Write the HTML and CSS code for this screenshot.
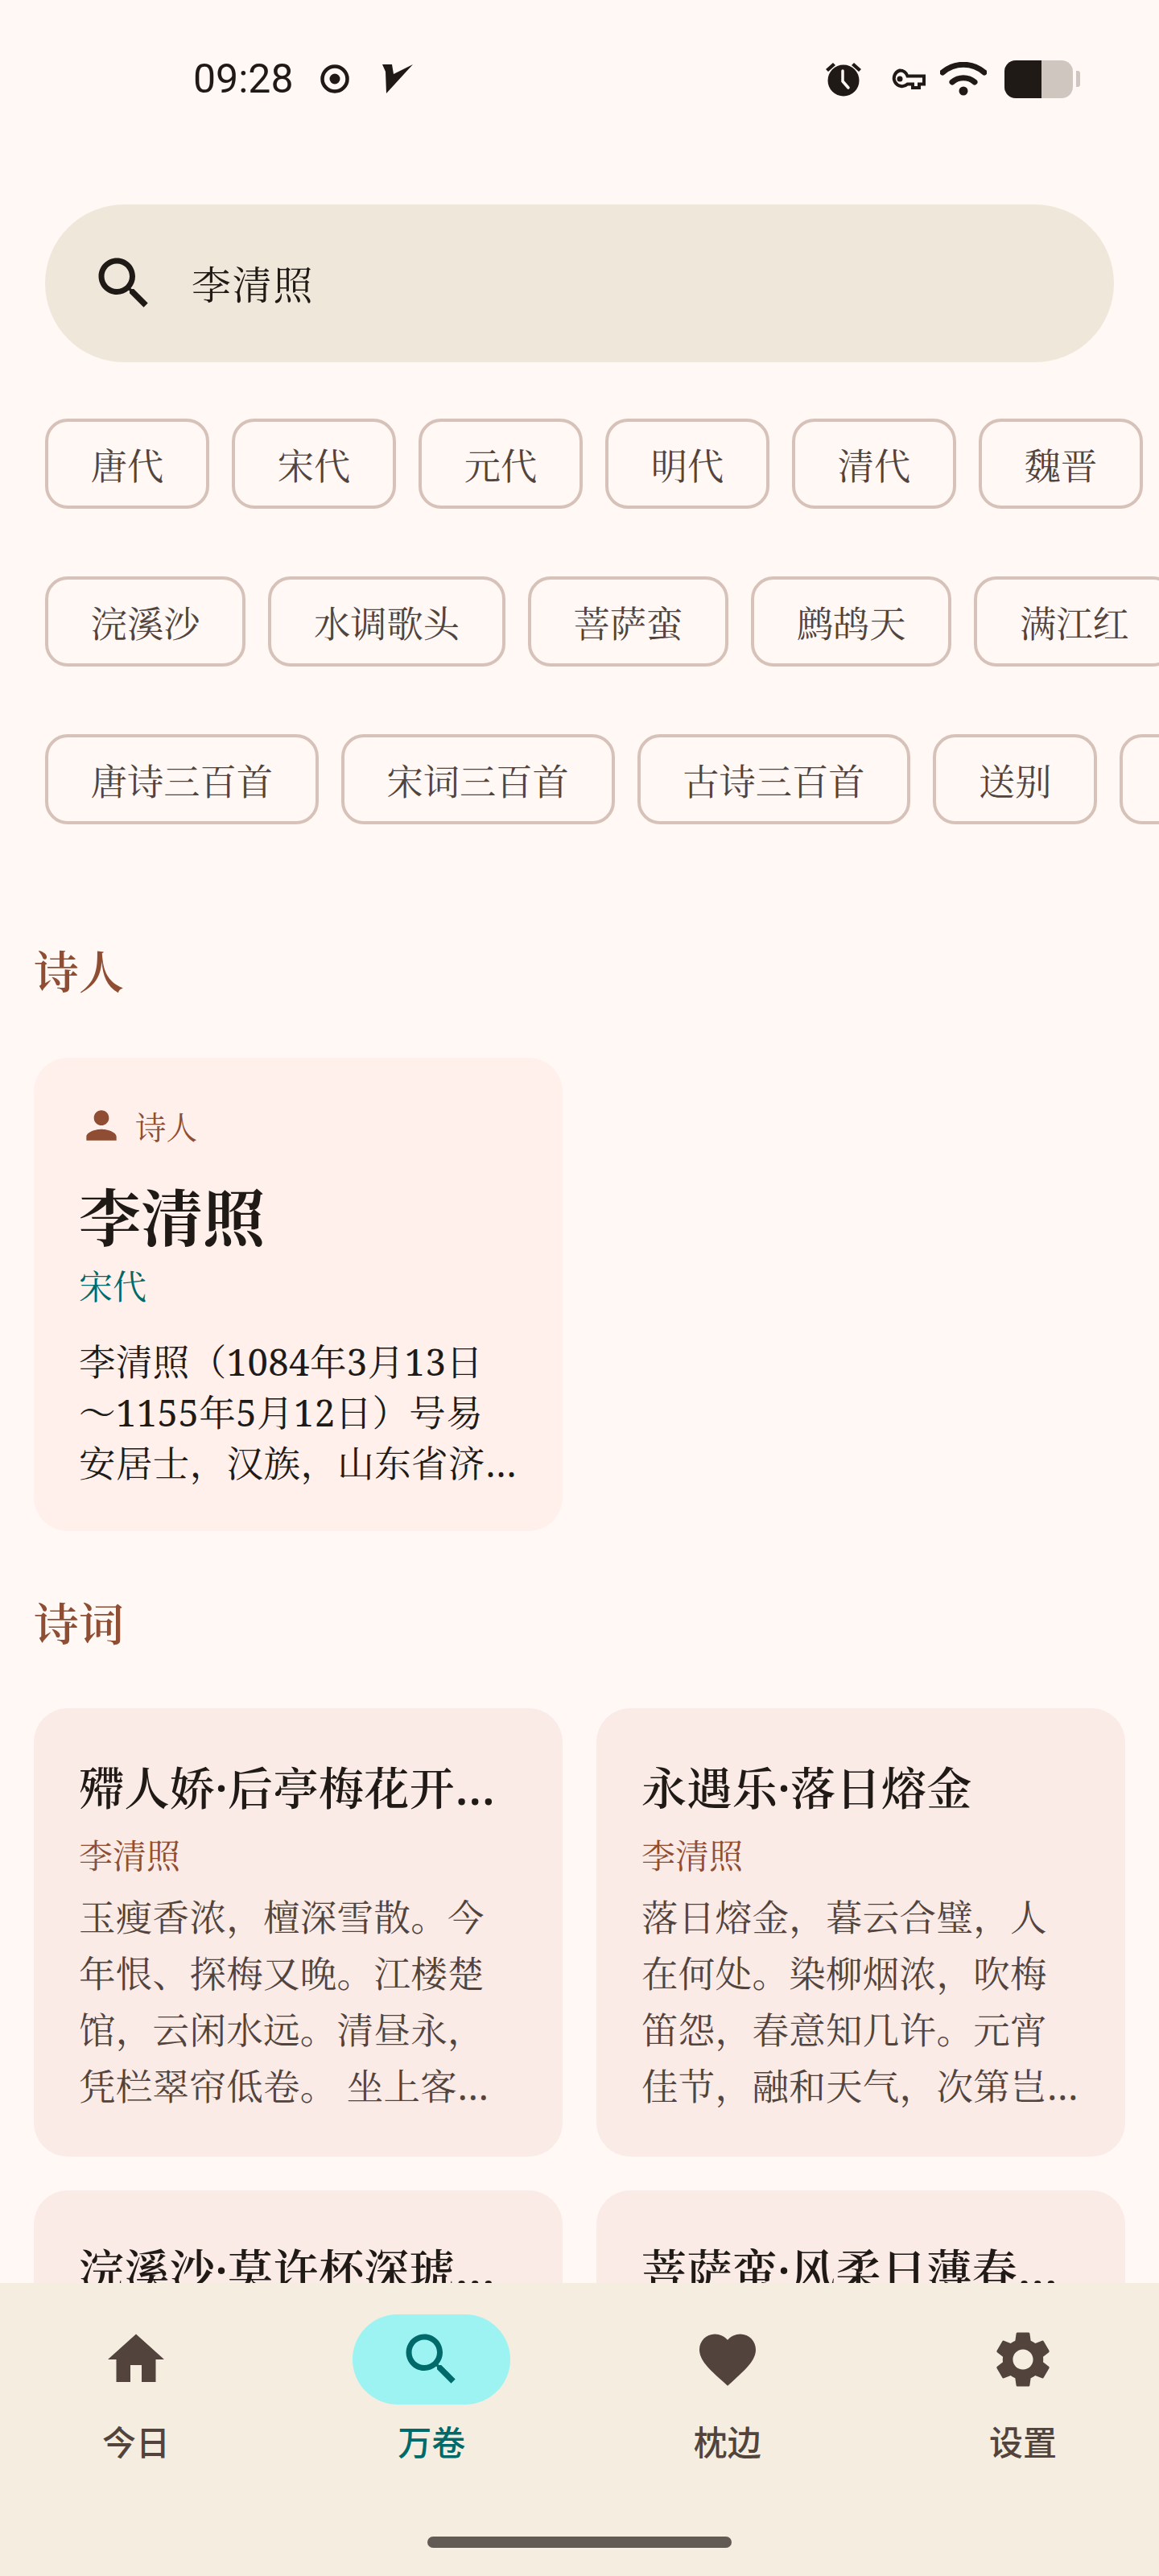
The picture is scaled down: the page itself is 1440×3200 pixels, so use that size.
FILE: index.html
```html
<!DOCTYPE html>
<html lang="zh-CN">
<head>
<meta charset="utf-8">
<title>万卷</title>
<link rel="stylesheet" href="styles.css">
</head>
<body>
<div class="screen">
  <main class="content">
    <header class="status">
      <div class="status-left">
        <span class="time">09:28</span>
        <svg class="ic-target" viewBox="0 0 36 36"><circle cx="18" cy="18" r="15.500" fill="none" stroke="#201a17" stroke-width="4.500"/><circle cx="18" cy="18" r="6.500" fill="#201a17"/></svg>
        <svg class="ic-v" viewBox="0 0 38 36"><path d="M0 0h12l2 12L38 0 5 36 4 9z" fill="#201a17"/></svg>
      </div>
      <div class="status-right">
        <svg class="ic-alarm" viewBox="0 0 44 44"><path d="M0 10l9-8 3 3-9 8zM44 10l-9-8-3 3 9 8z" fill="#201a17"/><circle cx="22" cy="24" r="19.500" fill="#201a17"/><path d="M21 12v13l7 8" fill="none" stroke="#fff8f5" stroke-width="3.500" stroke-linecap="round"/></svg>
        <svg class="ic-key" viewBox="0 0 44 26"><path d="M12 2.500a10 10 0 0 1 9.500 7H42v10h-6v4.500h-8v-4.500h-6.500A10 10 0 1 1 12 2.500z" fill="none" stroke="#201a17" stroke-width="4"/><circle cx="12" cy="13" r="3.500" fill="#201a17"/></svg>
        <svg class="ic-wifi" viewBox="0 0 58 42"><path d="M3 13C18 0 40 0 55 13M15 25c8-7 20-7 28 0" fill="none" stroke="#201a17" stroke-width="7" stroke-linecap="round"/><circle cx="29" cy="36" r="5.500" fill="#201a17"/></svg>
        <div class="battery"><div class="battery-body"><div class="battery-fill"></div></div><div class="battery-nub"></div></div>
      </div>
    </header>

    <div class="search">
      <svg class="ic-24" viewBox="0 0 24 24"><path fill="#201a17" d="M15.500 14h-.79l-.28-.27C15.410 12.590 16 11.110 16 9.500 16 5.910 13.090 3 9.500 3S3 5.910 3 9.500 5.910 16 9.500 16c1.610 0 3.090-.59 4.230-1.570l.27.28v.79l5 4.990L20.490 19l-4.990-5zm-6 0C7.010 14 5 11.990 5 9.500S7.010 5 9.500 5 14 7.010 14 9.500 11.990 14 9.500 14z"/></svg>
      <span class="search-text">李清照</span>
    </div>

    <div class="chip-rows">
      <div class="chip-row"><span class="chip">唐代</span><span class="chip">宋代</span><span class="chip">元代</span><span class="chip">明代</span><span class="chip">清代</span><span class="chip">魏晋</span></div>
      <div class="chip-row"><span class="chip">浣溪沙</span><span class="chip">水调歌头</span><span class="chip">菩萨蛮</span><span class="chip">鹧鸪天</span><span class="chip">满江红</span></div>
      <div class="chip-row"><span class="chip">唐诗三百首</span><span class="chip">宋词三百首</span><span class="chip">古诗三百首</span><span class="chip">送别</span><span class="chip">边塞</span></div>
    </div>

    <h2 class="section first">诗人</h2>
    <div class="grid">
      <article class="card poet">
        <div class="poet-tag">
          <svg class="ic-16" viewBox="0 0 24 24"><path fill="#8f4e33" d="M12 12c2.210 0 4-1.790 4-4s-1.790-4-4-4-4 1.790-4 4 1.790 4 4 4zm0 2c-2.670 0-8 1.340-8 4v2h16v-2c0-2.660-5.330-4-8-4z"/></svg>
          <span>诗人</span>
        </div>
        <h3 class="poet-name">李清照</h3>
        <div class="poet-era">宋代</div>
        <p class="poet-bio">李清照（1084年3月13日～1155年5月12日）号易安居士，汉族，山东省济南章丘人。</p>
      </article>
    </div>

    <h2 class="section">诗词</h2>
    <div class="grid">
      <article class="card poem">
        <h3 class="poem-title">殢人娇·后亭梅花开犹未</h3>
        <div class="poem-author">李清照</div>
        <p class="poem-body">玉瘦香浓，檀深雪散。今年恨、探梅又晚。江楼楚馆，云闲水远。清昼永，凭栏翠帘低卷。 坐上客来，尊前酒满。歌声共、水流云断。</p>
      </article>
      <article class="card poem">
        <h3 class="poem-title">永遇乐·落日熔金</h3>
        <div class="poem-author">李清照</div>
        <p class="poem-body">落日熔金，暮云合璧，人在何处。染柳烟浓，吹梅笛怨，春意知几许。元宵佳节，融和天气，次第岂无风雨。来相召、香车宝马。</p>
      </article>
      <article class="card poem">
        <h3 class="poem-title">浣溪沙·莫许杯深琥珀浓</h3>
        <div class="poem-author">李清照</div>
        <p class="poem-body">莫许杯深琥珀浓，未成沉醉意先融。疏钟已应晚来风。</p>
      </article>
      <article class="card poem">
        <h3 class="poem-title">菩萨蛮·风柔日薄春犹早</h3>
        <div class="poem-author">李清照</div>
        <p class="poem-body">风柔日薄春犹早，夹衫乍著心情好。睡起觉微寒，梅花鬓上残。</p>
      </article>
    </div>
  </main>

  <nav class="nav">
    <div class="nav-items">
      <div class="nav-item">
        <div class="nav-icon"><svg class="ic-24" viewBox="0 0 24 24"><path fill="#52443d" d="M10 20v-6h4v6h5v-8h3L12 3 2 12h3v8z"/></svg></div>
        <span class="nav-label">今日</span>
      </div>
      <div class="nav-item active">
        <div class="nav-icon"><svg class="ic-24" viewBox="0 0 24 24"><path fill="#006a6a" d="M15.500 14h-.79l-.28-.27C15.410 12.590 16 11.110 16 9.500 16 5.910 13.090 3 9.500 3S3 5.910 3 9.500 5.910 16 9.500 16c1.610 0 3.090-.59 4.230-1.570l.27.28v.79l5 4.990L20.490 19l-4.990-5zm-6 0C7.010 14 5 11.990 5 9.500S7.010 5 9.500 5 14 7.010 14 9.500 11.990 14 9.500 14z"/></svg></div>
        <span class="nav-label">万卷</span>
      </div>
      <div class="nav-item">
        <div class="nav-icon"><svg class="ic-24" viewBox="0 0 24 24"><path fill="#52443d" d="M12 21.350l-1.450-1.320C5.400 15.360 2 12.280 2 8.500 2 5.420 4.420 3 7.500 3c1.740 0 3.410.81 4.500 2.090C13.090 3.810 14.760 3 16.500 3 19.580 3 22 5.420 22 8.500c0 3.780-3.400 6.860-8.550 11.540L12 21.350z"/></svg></div>
        <span class="nav-label">枕边</span>
      </div>
      <div class="nav-item">
        <div class="nav-icon"><svg class="ic-24" viewBox="0 0 24 24"><path fill="#52443d" d="M19.140 12.940c.04-.3.06-.61.06-.94 0-.32-.02-.64-.07-.94l2.030-1.580c.18-.14.23-.41.12-.61l-1.920-3.320c-.12-.22-.37-.29-.59-.22l-2.390.96c-.5-.38-1.030-.7-1.620-.94l-.36-2.540c-.04-.24-.24-.41-.48-.41h-3.840c-.24 0-.43.17-.47.41l-.36 2.540c-.59.24-1.130.57-1.620.94l-2.390-.96c-.22-.08-.47 0-.59.22L2.740 8.870c-.12.21-.08.47.12.61l2.030 1.580c-.05.3-.09.63-.09.94s.02.64.07.94l-2.030 1.580c-.18.14-.23.41-.12.61l1.920 3.320c.12.22.37.29.59.22l2.390-.96c.5.38 1.030.7 1.620.94l.36 2.540c.05.24.24.41.48.41h3.840c.24 0 .44-.17.47-.41l.36-2.540c.59-.24 1.130-.56 1.620-.94l2.390.96c.22.08.47 0 .59-.22l1.920-3.320c.12-.22.07-.47-.12-.61l-2.010-1.580zM12 15.600c-1.980 0-3.600-1.620-3.600-3.600s1.620-3.600 3.600-3.600 3.600 1.620 3.600 3.600-1.620 3.600-3.600 3.600z"/></svg></div>
        <span class="nav-label">设置</span>
      </div>
    </div>
    <div class="handle"></div>
  </nav>
</div>
</body>
</html>
```
FILE: styles.css
```css
* { box-sizing: border-box; }
html, body { margin: 0; padding: 0; }
body {
  background: #fff8f5;
  color: #201a17;
  font-family: "Noto Serif", "Noto Serif CJK SC", "Liberation Serif", "Noto Sans CJK SC", serif;
}
.screen {
  width: 1440px;
  height: 3200px;
  display: flex;
  flex-direction: column;
  overflow: hidden;
}
.content { height: 2836px; overflow: hidden; flex: none; }
svg { display: block; flex: none; }
.ic-24 { width: 84px; height: 84px; }
.ic-16 { width: 56px; height: 56px; }

.status {
  height: 196px;
  padding: 0 98px 0 240px;
  display: flex;
  align-items: center;
  justify-content: space-between;
}
.status-left, .status-right { display: flex; align-items: center; }
.time { font: 400 50px/1 Roboto, sans-serif; color: #201a17; width: 158px; }
.ic-target { width: 36px; height: 36px; }
.ic-v { width: 38px; height: 36px; margin-left: 41px; }
.ic-alarm { width: 44px; height: 44px; }
.ic-key { width: 44px; height: 26px; margin-left: 36px; }
.ic-wifi { width: 58px; height: 42px; margin-left: 18px; }
.battery { display: flex; align-items: center; margin-left: 22px; }
.battery-body { width: 85px; height: 47px; border-radius: 14px; background: #cfc6c0; overflow: hidden; }
.battery-fill { width: 46px; height: 100%; background: #201a17; }
.battery-nub { width: 5px; height: 20px; margin-left: 4px; background: #cfc6c0; border-radius: 0 3px 3px 0; }

.search {
  margin: 58px 56px 0;
  height: 196px;
  border-radius: 98px;
  background: #efe8da;
  padding-left: 56px;
  display: flex;
  align-items: center;
  gap: 42px;
}
.search-text { font-size: 49px; line-height: 70px; color: #201a17; letter-spacing: 1.750px; padding-top: 2px; }

.chip-rows { margin-top: 70px; padding-left: 56px; display: flex; flex-direction: column; gap: 84px; }
.chip-row { display: flex; gap: 28px; }
.chip {
  flex: none;
  height: 112px;
  padding: 0 52.750px;
  border: 4px solid #d7c2b9;
  border-radius: 28px;
  font-size: 45.250px;
  color: #52443d;
  display: flex;
  align-items: center;
}

.section { margin: 72px 0 64px 42px; font-size: 56px; line-height: 84px; font-weight: 600; color: #8f4e33; }
.section.first { margin-top: 140px; margin-bottom: 66px; }

.grid { display: grid; grid-template-columns: 657px 657px; gap: 42px; padding-left: 42px; }
.card { border-radius: 42px; padding-left: 56px; padding-right: 56px; }
.card h3, .card p { margin: 0; }
.poet { background: #fff0ec; padding-top: 56px; padding-bottom: 53px; }
.poet-tag { display: flex; align-items: center; gap: 14px; height: 56px; font-size: 38.500px; color: #8f4e33; }
.poet-name { margin-top: 38px !important; font-size: 77px; line-height: 98px; font-weight: 700; }
.poet-era { margin-top: 8px; font-size: 42px; line-height: 56px; color: #006a6a; }
.poet-bio {
  margin-top: 34px !important;
  font-size: 45.500px;
  line-height: 63px;
  letter-spacing: 0.400px;
  display: -webkit-box;
  -webkit-box-orient: vertical;
  -webkit-line-clamp: 3;
  overflow: hidden;
}
.poem { background: #faebe7; padding-top: 56px; padding-bottom: 53px; }
.poem-title {
  font-size: 56px;
  line-height: 84px;
  font-weight: 600;
  letter-spacing: 0.400px;
  white-space: nowrap;
  overflow: hidden;
  text-overflow: ellipsis;
}
.poem-author { margin-top: 15px; font-size: 42px; line-height: 56px; color: #8f4e33; }
.poem-body {
  margin-top: 13px !important;
  font-size: 45.500px;
  line-height: 70px;
  letter-spacing: 0.300px;
  color: #52443d;
  display: -webkit-box;
  -webkit-box-orient: vertical;
  -webkit-line-clamp: 4;
  overflow: hidden;
}

.nav { height: 364px; flex: none; background: #f5eee0; padding-top: 39px; display: flex; flex-direction: column; }
.nav-items { display: flex; justify-content: space-between; padding: 0 71px; }
.nav-item { width: 196px; display: flex; flex-direction: column; align-items: center; }
.nav-icon { width: 196px; height: 112px; border-radius: 56px; display: flex; align-items: center; justify-content: center; }
.nav-label {
  margin-top: 17px;
  font-family: "Noto Sans CJK SC", sans-serif;
  font-size: 42px;
  line-height: 56px;
  font-weight: 500;
  color: #52443d;
}
.active .nav-icon { background: #9cf3f2; }
.active .nav-label { color: #006a6a; }
.handle { width: 378px; height: 14px; margin: 91px auto 0; border-radius: 7px; background: #625a55; }
```
